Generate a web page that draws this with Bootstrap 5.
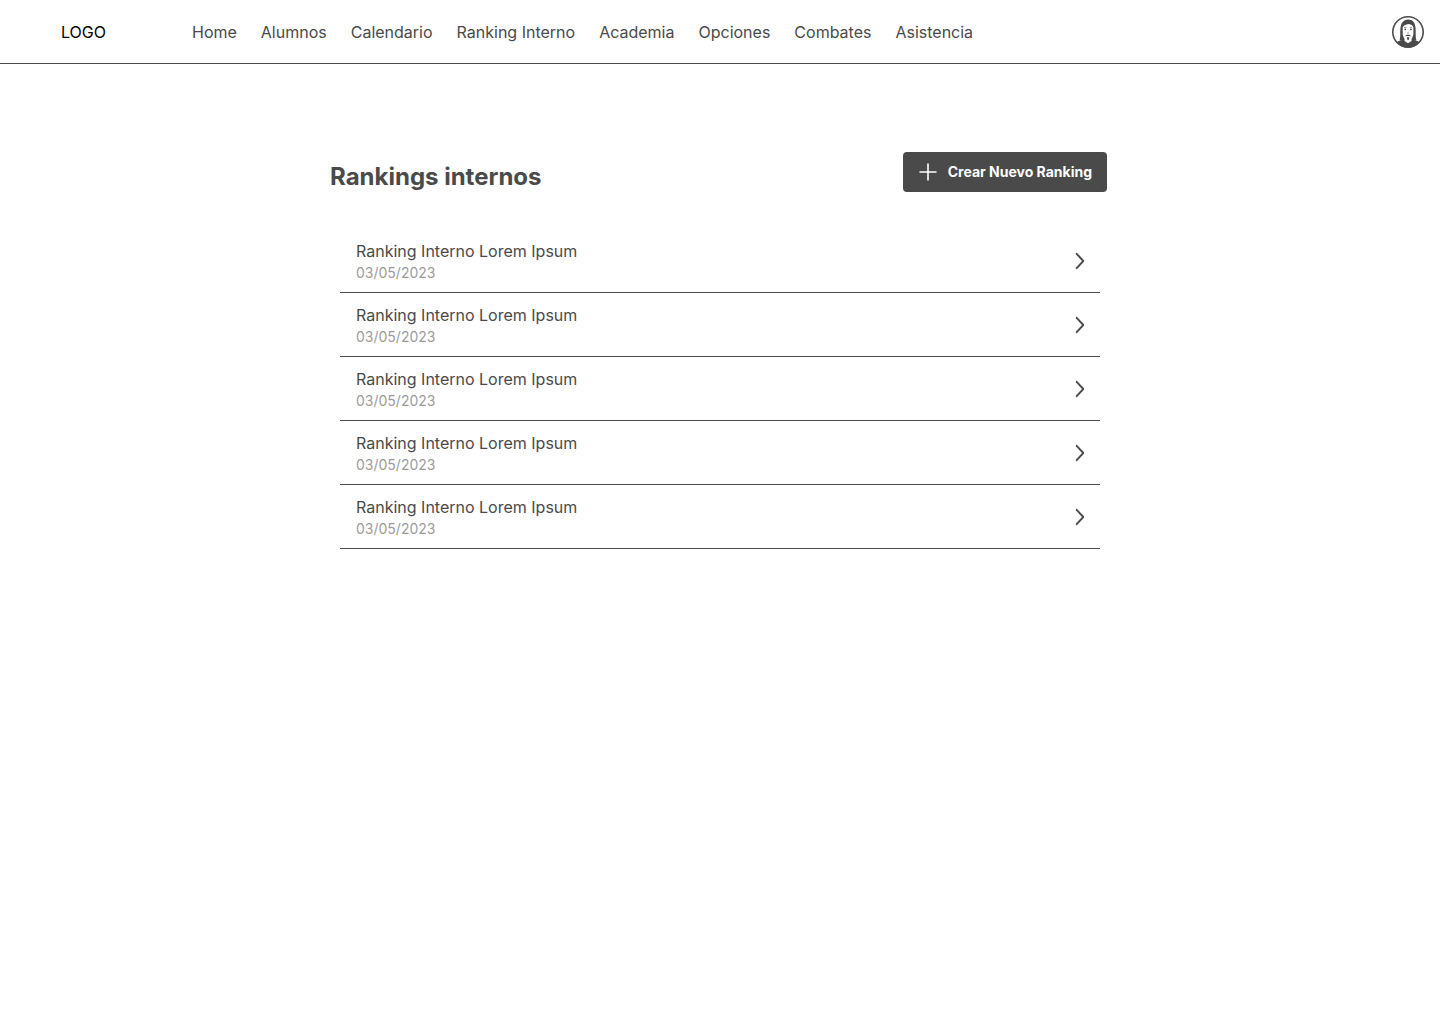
<!DOCTYPE html>
<html lang="es">
<head>
<meta charset="utf-8">
<meta name="viewport" content="width=device-width, initial-scale=1">
<title>Rankings internos</title>
<link href="https://cdn.jsdelivr.net/npm/bootstrap@5.3.0/dist/css/bootstrap.min.css" rel="stylesheet">
<style>
  body { font-family: Inter, "Liberation Sans", sans-serif; color: #4a4a4a; background: #fff; }
  .topbar { min-height: 64px; border-bottom: 1px solid #4a4a4a; padding: 0 16px 0 61px; }
  .topbar .navbar-brand { width: 131px; margin: 0; padding: 0; font-size: 16px; line-height: 24px; color: #000; }
  .topbar .navbar-nav { gap: 24px; }
  .topbar .navbar-nav .nav-link { padding: 0; font-size: 16px; line-height: 24px; color: #4a4a4a; }
  .rankings { max-width: 780px; padding-top: 88px; }
  .rankings-head { padding-right: 3px; margin-bottom: 36px; }
  .rankings-head h1 { font-size: 24px; line-height: 32px; margin-top: 9px; }
  .btn-create { --bs-btn-color: #fff; --bs-btn-bg: #4a4a4a; --bs-btn-hover-color: #fff; --bs-btn-hover-bg: #333; --bs-btn-active-color: #fff; --bs-btn-active-bg: #222;
    height: 40px; padding: 0 15px 0 16px; border: 0; border-radius: 4px; font-size: 14px; font-weight: 700; line-height: 20px; gap: 11px; }
  .ranking-list { margin: 0 10px; }
  .ranking-list .ranking-item { height: 64px; padding: 0 10px 0 16px; color: #4a4a4a; border-width: 0 0 1px; border-color: #4a4a4a; }
  .ranking-name { font-size: 16px; line-height: 24px; }
  .ranking-date { font-size: 14px; line-height: 20px; color: #9b9b9b; }
</style>
<script src="https://cdn.jsdelivr.net/npm/bootstrap@5.3.0/dist/js/bootstrap.bundle.min.js" defer></script>
</head>
<body>
<svg class="d-none" aria-hidden="true">
  <symbol id="chevron" viewBox="0 0 20 20"><path d="M6.700 2.800 13.300 10 6.700 17.200" fill="none" stroke="#4a4a4a" stroke-width="1.900" stroke-linecap="round" stroke-linejoin="round"/></symbol>
</svg>
<nav class="navbar navbar-expand topbar" aria-label="Principal">
  <a class="navbar-brand" href="#">LOGO</a>
  <ul class="navbar-nav me-auto">
    <li class="nav-item"><a class="nav-link" href="#">Home</a></li>
    <li class="nav-item"><a class="nav-link" href="#">Alumnos</a></li>
    <li class="nav-item"><a class="nav-link" href="#">Calendario</a></li>
    <li class="nav-item"><a class="nav-link" href="#">Ranking Interno</a></li>
    <li class="nav-item"><a class="nav-link" href="#">Academia</a></li>
    <li class="nav-item"><a class="nav-link" href="#">Opciones</a></li>
    <li class="nav-item"><a class="nav-link" href="#">Combates</a></li>
    <li class="nav-item"><a class="nav-link" href="#">Asistencia</a></li>
  </ul>
  <a href="#" class="d-flex" aria-label="Perfil">
    <svg width="32" height="32" viewBox="0 0 32 32" aria-hidden="true">
      <defs><clipPath id="face"><circle cx="16" cy="16" r="15.500"/></clipPath></defs>
      <circle cx="16" cy="16" r="15.200" fill="#fff"/>
      <g clip-path="url(#face)">
        <path d="M3 27.500c2-2 4-3 7.500-3.500h11c3.500.5 5.500 1.500 7.500 3.500v5H3z" fill="#4a4a4a"/>
        <path d="M7.700 24c1-3 .2-8.500.8-12.500C9.200 6.500 12 3.800 16 3.600c4.500-.2 6.900 3 7.500 8 .5 4-.2 9.500.9 12.400l-3.700 2h-9z" fill="#4a4a4a"/>
        <path d="M10.700 11.200c.8-1.800 2.500-2.700 6-3.300 2.500.4 4 1.500 4.700 3.300v6.300c0 3.700-2.400 6.700-5.300 6.700s-5.400-3-5.400-6.700z" fill="#fff"/>
        <path d="M12.500 22h1.500l2 1.800 2-1.800h1.600v3L16 27.300 12.500 25z" fill="#fff"/>
        <path d="M12.900 20.500c.8-1.300 1.800-1.700 3.200-1.700s2.400.4 3.200 1.700c-1-.5-1.500-.6-3.200-.6s-2.300.1-3.200.6z" fill="#4a4a4a"/>
        <path d="M14.900 21.300h2.400l-.3 2.200c-.5.500-1.200.5-1.800 0z" fill="#4a4a4a"/>
        <circle cx="13.300" cy="13.300" r=".9" fill="#4a4a4a"/><circle cx="18.900" cy="13.300" r=".9" fill="#4a4a4a"/>
        <path d="M12 11.700c.8-.5 1.700-.5 2.500 0M17.700 11.700c.8-.5 1.700-.5 2.500 0" fill="none" stroke="#4a4a4a" stroke-width=".6"/>
        <path d="M15.200 17h1.800" stroke="#4a4a4a" stroke-width=".6"/>
      </g>
      <circle cx="16" cy="16" r="15.200" fill="none" stroke="#4a4a4a" stroke-width="1.600"/>
    </svg>
  </a>
</nav>
<main class="container-fluid px-0 rankings">
  <div class="rankings-head d-flex justify-content-between align-items-start">
    <h1 class="fw-bold mb-0">Rankings internos</h1>
    <button type="button" class="btn btn-create d-inline-flex align-items-center">
      <svg width="18" height="18" viewBox="0 0 18 18" aria-hidden="true"><path d="M9 1v16M1 9h16" stroke="#fff" stroke-width="1.600" stroke-linecap="round"/></svg>
      Crear Nuevo Ranking
    </button>
  </div>
  <div class="list-group rounded-0 ranking-list">
    <a href="#" class="list-group-item list-group-item-action ranking-item d-flex justify-content-between align-items-center"><span class="d-flex flex-column"><span class="ranking-name">Ranking Interno Lorem Ipsum</span><span class="ranking-date">03/05/2023</span></span><svg width="20" height="20" aria-hidden="true"><use href="#chevron"/></svg></a>
    <a href="#" class="list-group-item list-group-item-action ranking-item d-flex justify-content-between align-items-center"><span class="d-flex flex-column"><span class="ranking-name">Ranking Interno Lorem Ipsum</span><span class="ranking-date">03/05/2023</span></span><svg width="20" height="20" aria-hidden="true"><use href="#chevron"/></svg></a>
    <a href="#" class="list-group-item list-group-item-action ranking-item d-flex justify-content-between align-items-center"><span class="d-flex flex-column"><span class="ranking-name">Ranking Interno Lorem Ipsum</span><span class="ranking-date">03/05/2023</span></span><svg width="20" height="20" aria-hidden="true"><use href="#chevron"/></svg></a>
    <a href="#" class="list-group-item list-group-item-action ranking-item d-flex justify-content-between align-items-center"><span class="d-flex flex-column"><span class="ranking-name">Ranking Interno Lorem Ipsum</span><span class="ranking-date">03/05/2023</span></span><svg width="20" height="20" aria-hidden="true"><use href="#chevron"/></svg></a>
    <a href="#" class="list-group-item list-group-item-action ranking-item d-flex justify-content-between align-items-center"><span class="d-flex flex-column"><span class="ranking-name">Ranking Interno Lorem Ipsum</span><span class="ranking-date">03/05/2023</span></span><svg width="20" height="20" aria-hidden="true"><use href="#chevron"/></svg></a>
  </div>
</main>
</body>
</html>
